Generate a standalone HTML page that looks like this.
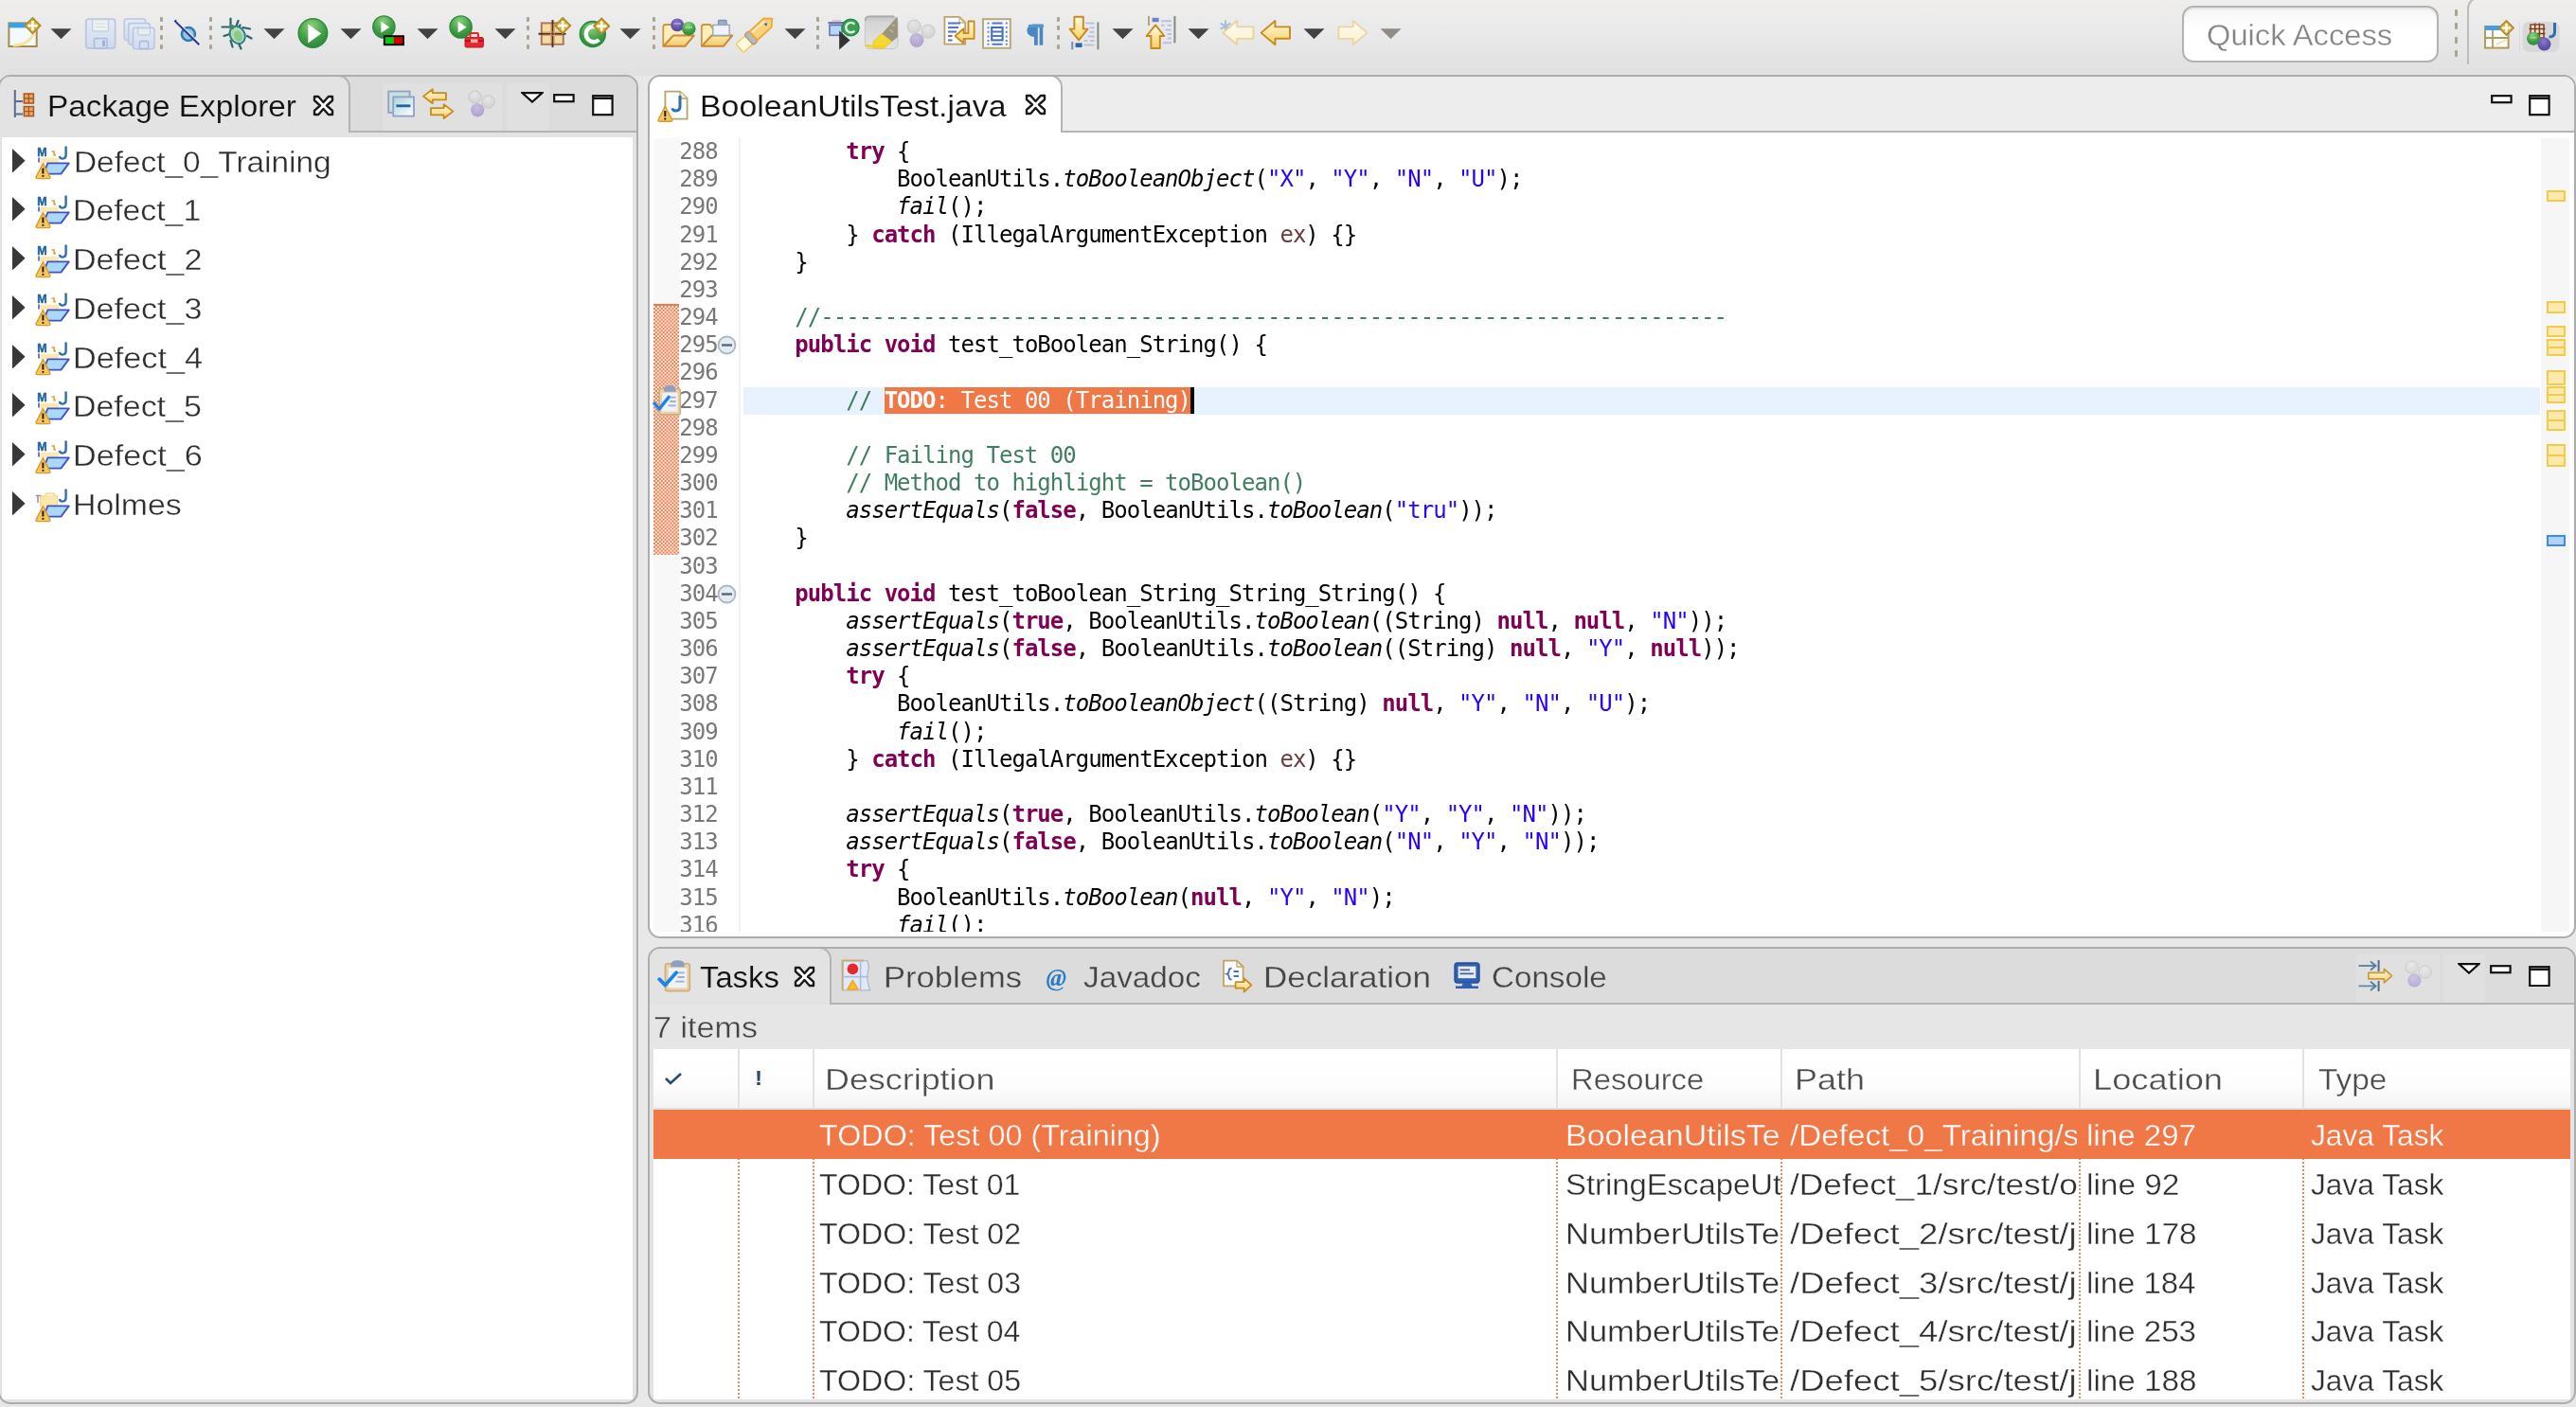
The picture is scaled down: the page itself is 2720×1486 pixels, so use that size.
<!DOCTYPE html><html><head><meta charset="utf-8"><title>Eclipse</title><style>
html,body{margin:0;padding:0;}
body{width:2720px;height:1486px;overflow:hidden;position:relative;background:#e8e8e8;font-family:"Liberation Sans", "DejaVu Sans", sans-serif;color:#222;}
div,span,svg{position:absolute;box-sizing:border-box;}
.t{filter:blur(0.45px);white-space:nowrap;transform-origin:0 0;transform:scaleX(1.10);font-size:31px;line-height:34px;color:#2a2a2a;}
.code{font-family:"DejaVu Sans Mono", "Liberation Mono", monospace;font-size:24px;letter-spacing:-0.973px;line-height:29.17px;height:29.17px;white-space:pre;color:#000;}
.code span{position:static;}
.k{color:#7f0055;font-weight:bold;}
.s{color:#2a00ff;}
.c{color:#3f7f5f;}
.i{font-style:italic;}
.v{color:#6a3e3e;}
.ln{color:#787878;}
.sel{background:#f07746;color:#fff;}
.selb{font-weight:bold;}
</style></head><body>
<div id="toolbar" style="left:0;top:0;width:2720px;height:80px;background:linear-gradient(#efeeed,#e9e9e9 45%,#e3e3e3 80%,#e1e1e1);"></div>
<svg width="0" height="0" style="left:0;top:0"><defs>
<linearGradient id="gy" x1="0" y1="0" x2="0" y2="1"><stop offset="0" stop-color="#fffbe6"/><stop offset="1" stop-color="#f9cf5f"/></linearGradient>
<linearGradient id="gyp" x1="0" y1="0" x2="0" y2="1"><stop offset="0" stop-color="#fdfaf0"/><stop offset="1" stop-color="#fbf0d0"/></linearGradient>
<radialGradient id="gg" cx="0.45" cy="0.25" r="0.8"><stop offset="0" stop-color="#8ed07f"/><stop offset="0.6" stop-color="#3f9e45"/><stop offset="1" stop-color="#2b8238"/></radialGradient>
<radialGradient id="gp" cx="0.45" cy="0.3" r="0.8"><stop offset="0" stop-color="#8a78c8"/><stop offset="1" stop-color="#4a3a98"/></radialGradient>
<radialGradient id="ggr" cx="0.45" cy="0.3" r="0.8"><stop offset="0" stop-color="#e6e6e6"/><stop offset="1" stop-color="#cfcfcf"/></radialGradient>
<radialGradient id="gpl" cx="0.45" cy="0.3" r="0.8"><stop offset="0" stop-color="#c8bede"/><stop offset="1" stop-color="#aa9ccc"/></radialGradient>
<linearGradient id="gf" x1="0" y1="0" x2="0" y2="1"><stop offset="0" stop-color="#fde9a8"/><stop offset="1" stop-color="#f6c968"/></linearGradient>
<linearGradient id="gs" x1="0" y1="0" x2="0" y2="1"><stop offset="0" stop-color="#e4ebf5"/><stop offset="1" stop-color="#cfdaec"/></linearGradient>
<linearGradient id="gt" x1="0" y1="0" x2="1" y2="1"><stop offset="0" stop-color="#a8d4d8"/><stop offset="1" stop-color="#ffffff"/></linearGradient>
<linearGradient id="gbtn" x1="0" y1="0" x2="0" y2="1"><stop offset="0" stop-color="#c4c4c4"/><stop offset="0.2" stop-color="#d6d6d6"/><stop offset="1" stop-color="#e2e2e2"/></linearGradient>
</defs></svg>
<svg style="left:0.0px;top:0.0px;filter:blur(0.5px);" width="1500.0" height="80.0" viewBox="0 0 1500 80"><rect x="9.4" y="24.4" width="29.3" height="24.6" fill="#f2fafe" stroke="#a58b4e" stroke-width="2"/><rect x="9.4" y="24" width="22" height="5.4" fill="#3ea0e0"/><path d="M14 48 Q32 47 36 34" stroke="#f6e3a0" stroke-width="3" fill="none"/><path d="M34.5 18.9 L42.7 27.1 L34.5 35.3 L26.3 27.1 Z" fill="#d9b24a" stroke="#b08a2a" stroke-width="1.6"/><path d="M34.5 22.0 V32.2 M29.4 27.1 H39.6" stroke="#fffbe8" stroke-width="2.6" fill="none"/><rect x="90.8" y="20.2" width="30.8" height="30.8" rx="3" fill="url(#gs)" stroke="#b9c8e2" stroke-width="1.8"/><rect x="97.5" y="20.5" width="17" height="12.5" rx="1.5" fill="#eef1f1" stroke="#c3cfdc" stroke-width="1.4"/><path d="M100.5 25 H111.5 M100.5 28.6 H111.5" stroke="#d4dde4" stroke-width="1.2"/><rect x="99.5" y="40.5" width="13.5" height="10.5" rx="1.5" fill="#d6deee" stroke="#a9bbdc" stroke-width="1.6"/><rect x="108" y="42.5" width="3" height="6.5" fill="#9fb3d9"/><rect x="131.2" y="20.0" width="22.5" height="22.5" rx="2.5" fill="url(#gs)" stroke="#b9c8e2" stroke-width="1.6"/><rect x="135.7" y="24.6" width="22.5" height="22.5" rx="2.5" fill="url(#gs)" stroke="#b9c8e2" stroke-width="1.6"/><rect x="140.5" y="29.3" width="22.5" height="22.5" rx="2.5" fill="url(#gs)" stroke="#b9c8e2" stroke-width="1.6"/><rect x="145.5" y="29.8" width="13" height="7.2" rx="1.2" fill="#e8edf3" stroke="#c3cfdc" stroke-width="1.3"/><rect x="147.5" y="43.5" width="9" height="8" rx="1" fill="#d6deee" stroke="#a9bbdc" stroke-width="1.4"/><circle cx="198.9" cy="36" r="7" fill="#9cc4e0" stroke="#2f7db4" stroke-width="2.6"/><path d="M184.5 21.5 L210.5 47" stroke="#2b3990" stroke-width="2.6"/><path d="M186.5 21.8 L212 46.5" stroke="#ffffff" stroke-width="1.2" opacity="0.8"/><g stroke="#2d6464" stroke-width="2.2" fill="none" stroke-linecap="round"><path d="M243.5 19.5 V27 M251.5 22 L249.5 27.5 M234.5 28.5 H243 M236.5 38 L242.5 36 M243.5 43 L245.5 49.5 M252.5 47 L254.5 51.5 M256.5 29 L264 30.5 M261 38 L265.5 40.5 M253.5 26.5 L252 30"/></g><ellipse cx="250.7" cy="36.9" rx="7.6" ry="9.6" transform="rotate(-28 250.7 36.9)" fill="#b4dcae" stroke="#2d7f95" stroke-width="2"/><ellipse cx="251.5" cy="38" rx="4.2" ry="6" transform="rotate(-28 251.5 38)" fill="#8fc98a"/><circle cx="244.8" cy="28.6" r="2.6" fill="#3e8c62"/><circle cx="330.4" cy="35" r="15.2" fill="url(#gg)" stroke="#2f8a3e" stroke-width="1.6"/><path d="M325.3 25.4 V45.4 L339.2 35.4 Z" fill="#ffffff"/><circle cx="405.4" cy="28.5" r="11.6" fill="url(#gg)" stroke="#2f8a3e" stroke-width="1.4"/><path d="M402.4 22.8 V34.6 L411.4 28.8 Z" fill="#ffffff"/><rect x="405.8" y="38.2" width="20.2" height="9" fill="#d40000" stroke="#000" stroke-width="1.9"/><rect x="406.8" y="39.2" width="9" height="7" fill="#00cc10"/><circle cx="486.6" cy="28.5" r="11.6" fill="url(#gg)" stroke="#2f8a3e" stroke-width="1.4"/><path d="M483.6 22.8 V34.6 L492.6 28.8 Z" fill="#ffffff"/><rect x="491" y="39.5" width="19.4" height="10.5" rx="1.5" fill="#e8242c" stroke="#c81820" stroke-width="1"/><rect x="496.5" y="35" width="8.5" height="5.5" rx="1" fill="none" stroke="#e8242c" stroke-width="2"/><path d="M491 43.2 H510.4" stroke="#a01018" stroke-width="1.6"/><rect x="497" y="41.5" width="7.5" height="3.6" fill="#f5b0b0"/><rect x="571.8" y="24.4" width="23" height="22.4" fill="#f3dba4" stroke="#b07a50" stroke-width="2"/><path d="M583.5 21 V50 M568.5 35.7 H597.5" stroke="#5c2d1c" stroke-width="2"/><path d="M573 34 H594 M573 37.4 H594 M581.8 25.5 V46 M585.2 25.5 V46" stroke="#c49a68" stroke-width="1.2" opacity="0.8"/><path d="M594.2 18.9 L602.4 27.1 L594.2 35.3 L586.0 27.1 Z" fill="#d9b24a" stroke="#b08a2a" stroke-width="1.6"/><path d="M594.2 22.0 V32.2 M589.1 27.1 H599.3" stroke="#fffbe8" stroke-width="2.6" fill="none"/><circle cx="625.8" cy="36" r="13.4" fill="url(#gg)" stroke="#2a8a40" stroke-width="1.6"/><path d="M632.5 30 A8.2 8.2 0 1 0 632.5 42" stroke="#ffffff" stroke-width="4.4" fill="none"/><path d="M635.2 19.4 L643.4 27.6 L635.2 35.8 L627.0 27.6 Z" fill="#d9b24a" stroke="#b08a2a" stroke-width="1.6"/><path d="M635.2 22.5 V32.7 M630.1 27.6 H640.3" stroke="#fffbe8" stroke-width="2.6" fill="none"/><path d="M700.3 48.6 V28.5 Q700.3 26 702.8 26 H709.3 L711.8 29.5 H723.3 V38" fill="#fdeebc" stroke="#cf9540" stroke-width="1.8"/><path d="M700.5 48.8 L710.8 37.6 H732.7 L723.3 48.8 Z" fill="url(#gf)" stroke="#c88838" stroke-width="2" stroke-linejoin="round"/><circle cx="715.2" cy="26.4" r="6.9" fill="url(#gp)"/><path d="M711.5 25 H719" stroke="#b9aee0" stroke-width="1.4"/><circle cx="727.3" cy="30.2" r="7.3" fill="url(#gg)"/><path d="M723.5 29 H731" stroke="#a8dca0" stroke-width="1.4"/><path d="M740.8 48.6 V28.5 Q740.8 26 743.3 26 H749.8 L752.3 29.5 H763.8 V38" fill="#fdeebc" stroke="#cf9540" stroke-width="1.8"/><path d="M741.0 48.8 L751.3 37.6 H773.2 L763.8 48.8 Z" fill="url(#gf)" stroke="#c88838" stroke-width="2" stroke-linejoin="round"/><rect x="758.5" y="21.5" width="8.6" height="5" rx="1" fill="#9db0d0" stroke="#7890b8" stroke-width="1.3"/><rect x="752.8" y="26.4" width="17.4" height="11" fill="#f0f3fc" stroke="#9aa8b0" stroke-width="1.4"/><g transform="rotate(-42.5 798 35.5)"><rect x="775" y="29.5" width="14" height="12" rx="2" fill="#fffbe0" stroke="#f3cf60" stroke-width="1.6"/><rect x="788" y="28.2" width="6.5" height="14.6" rx="2.5" fill="#b9b7c0" stroke="#a89868" stroke-width="1.2"/><path d="M794.5 29.3 H815 L821.5 35.5 L815 41.7 H794.5 Z" fill="#fbd27c" stroke="#eaa838" stroke-width="1.7"/><path d="M796 32 H814" stroke="#fdeabb" stroke-width="2.2"/><path d="M811.5 33.5 l3 2 l-3 2 z" fill="#3557a8"/></g><rect x="876" y="26.5" width="13" height="10.8" fill="#b5d9f3" stroke="#6a72b8" stroke-width="1.6"/><path d="M874.5 24.2 H891" stroke="#6a72b8" stroke-width="2.4"/><path d="M879 22 H888" stroke="#e3c3c8" stroke-width="2.2"/><path d="M886.1 32.4 V52.6 L897.6 42.5 Z" fill="#333333"/><circle cx="898.2" cy="29" r="8.8" fill="#3aa052" stroke="#1f8a3e" stroke-width="1.5"/><path d="M902.3 25.6 A5.2 5.2 0 1 0 902.3 32.6" stroke="#e6f5e6" stroke-width="2.4" fill="none"/><rect x="913.4" y="17.2" width="34.6" height="34.4" rx="5" fill="url(#gbtn)" stroke="#c6c6c6" stroke-width="1"/><path d="M913.6 22 Q913.6 17.4 918 17.4 H944" stroke="#a9a9a9" stroke-width="1.6" fill="none"/><path d="M947.6 17.6 L948 39 L941 44.5 L930.5 36.5 Z" fill="#9b957c"/><path d="M942 26 l3 1.5 M939.5 31.5 l4 2.5" stroke="#b9b5a0" stroke-width="1.5"/><path d="M931 35.6 L941.5 43.8 L933.5 51 L921.5 50.4 L922.6 43.5 Z" fill="#f6d832" stroke="#e8c020" stroke-width="0.8"/><path d="M913.8 48.2 L934 50 " stroke="#f2d21e" stroke-width="2.6"/><circle cx="965.2" cy="28.0" r="7.0" fill="url(#ggr)" stroke="#c6c6c6" stroke-width="1"/><circle cx="980.1" cy="33.2" r="7.0" fill="url(#ggr)" stroke="#c6c6c6" stroke-width="1"/><circle cx="968.0" cy="42.5" r="7.5" fill="url(#gpl)"/><path d="M997.4 17.9 H1013 L1019.2 24 V46.6 H997.4 Z" fill="#fbfcfd" stroke="#b9a468" stroke-width="1.8"/><path d="M1013 17.9 V24 H1019.2" fill="none" stroke="#c9b888" stroke-width="1.3"/><path d="M1001 24.5 H1014 M1001 29 H1012 M1001 33.5 H1010 M1001 38 H1005.5 M1001 42.5 H1005.5" stroke="#5575c0" stroke-width="2"/><path d="M1022.5 22.5 H1028.6 V40.8 H1017.5 V45.8 L1008.5 38 L1017.5 30.3 V35.2 H1022.5 Z" fill="url(#gy)" stroke="#c88a1c" stroke-width="1.8" stroke-linejoin="round"/><rect x="1038" y="20.2" width="28.8" height="30.6" fill="#f6f8fc" stroke="#b7a978" stroke-width="2"/><rect x="1047.2" y="29" width="11.4" height="13.4" fill="#fff" stroke="#3a6fb4" stroke-width="2"/><path d="M1047.5 24.6 H1058.5 M1047.5 33.4 H1058.5 M1047.5 38 H1058.5 M1047.5 46.8 H1058.5" stroke="#5575c0" stroke-width="2"/><path d="M1042.5 24.6 h2 M1042.5 29.2 h2 M1042.5 33.8 h2 M1042.5 38.4 h2 M1042.5 43 h2 M1042.5 46.8 h2 M1061.8 24.6 h2 M1061.8 29.2 h2 M1061.8 33.8 h2 M1061.8 38.4 h2 M1061.8 43 h2 M1061.8 46.8 h2" stroke="#6a86c8" stroke-width="2"/><path d="M1101.5 25.6 H1091 A6.6 6.6 0 0 0 1091 38.8 H1092 V47.8 H1095.8 V29 H1097.6 V47.8 H1101.2 V29 Z" fill="#4a86c4"/><path d="M1086 26 H1102 V29.2 H1086 Z" fill="#5a94cc"/><path d="M1146 24.6 H1155.5 M1150.5 29.2 H1155.5 M1150.5 33.8 H1155.5 M1148.5 38.4 H1155.5 M1144.5 43 H1148.5 M1151 43 H1155.5 M1144.5 47.4 H1155.5" stroke="#b9c1e3" stroke-width="2"/><path d="M1159.4 23.4 V52.3" stroke="#7f8a7c" stroke-width="2"/><path d="M1132.2 44 V52.3" stroke="#7f8cb0" stroke-width="2"/><rect x="1135.6" y="45.4" width="7" height="4.6" fill="#2f66a8"/><path d="M1134.4 17.8 H1143.8 V30.6 H1148.6 L1139.1 42.4 L1129.6 30.6 H1134.4 Z" fill="url(#gy)" stroke="#c88a1c" stroke-width="1.9" stroke-linejoin="round"/><path d="M1226 22.2 H1237 M1226 26.8 H1229.5 M1232.5 26.8 H1237 M1230.5 31.4 H1237 M1232.5 36 H1237 M1232.5 40.6 H1237 M1228 45.2 H1237" stroke="#b9c1e3" stroke-width="2"/><path d="M1240.4 16.9 V45.3" stroke="#7f8a7c" stroke-width="2"/><path d="M1213 16.9 V27" stroke="#b0a870" stroke-width="2"/><rect x="1216.6" y="18.8" width="7" height="4.4" fill="#6c83c0"/><path d="M1215.4 51 H1224.8 V38 H1229.4 L1220.1 26.4 L1210.6 38 H1215.4 Z" fill="url(#gy)" stroke="#c88a1c" stroke-width="1.9" stroke-linejoin="round"/><path d="M1294 21.6 V33.6 M1288.6 24.6 L1299.4 30.6 M1299.4 24.6 L1288.6 30.6" stroke="#a4bedb" stroke-width="2"/><path d="M1291.4 34.6 L1306.2 22 V28.4 H1323.4 V40.8 H1306.2 V47.2 Z" fill="url(#gyp)" stroke="#ead29c" stroke-width="1.8" stroke-linejoin="round"/><path d="M1331.6 34.6 L1346.4 22 V28.4 H1362 V40.8 H1346.4 V47.2 Z" fill="url(#gy)" stroke="#c88a1c" stroke-width="1.9" stroke-linejoin="round"/><path d="M1443.6 34.6 L1428.8 22 V28.4 H1413.4 V40.8 H1428.8 V47.2 Z" fill="url(#gyp)" stroke="#ecd4a0" stroke-width="1.8" stroke-linejoin="round"/></svg>
<svg style="left:53.4px;top:29.6px;filter:blur(0.5px);" width="23.0" height="11.4" viewBox="0 0 23 11.4"><path d="M0.5 0.3 H22.5 L11.5 11.2 Z" fill="#424242"/></svg>
<svg style="left:278.2px;top:29.6px;filter:blur(0.5px);" width="23.0" height="11.4" viewBox="0 0 23 11.4"><path d="M0.5 0.3 H22.5 L11.5 11.2 Z" fill="#424242"/></svg>
<svg style="left:359.3px;top:29.6px;filter:blur(0.5px);" width="23.0" height="11.4" viewBox="0 0 23 11.4"><path d="M0.5 0.3 H22.5 L11.5 11.2 Z" fill="#424242"/></svg>
<svg style="left:440.3px;top:29.6px;filter:blur(0.5px);" width="23.0" height="11.4" viewBox="0 0 23 11.4"><path d="M0.5 0.3 H22.5 L11.5 11.2 Z" fill="#424242"/></svg>
<svg style="left:521.5px;top:29.6px;filter:blur(0.5px);" width="23.0" height="11.4" viewBox="0 0 23 11.4"><path d="M0.5 0.3 H22.5 L11.5 11.2 Z" fill="#424242"/></svg>
<svg style="left:654.3px;top:29.6px;filter:blur(0.5px);" width="23.0" height="11.4" viewBox="0 0 23 11.4"><path d="M0.5 0.3 H22.5 L11.5 11.2 Z" fill="#424242"/></svg>
<svg style="left:827.9px;top:29.6px;filter:blur(0.5px);" width="23.0" height="11.4" viewBox="0 0 23 11.4"><path d="M0.5 0.3 H22.5 L11.5 11.2 Z" fill="#424242"/></svg>
<svg style="left:1173.8px;top:29.6px;filter:blur(0.5px);" width="23.0" height="11.4" viewBox="0 0 23 11.4"><path d="M0.5 0.3 H22.5 L11.5 11.2 Z" fill="#424242"/></svg>
<svg style="left:1254.4px;top:29.6px;filter:blur(0.5px);" width="23.0" height="11.4" viewBox="0 0 23 11.4"><path d="M0.5 0.3 H22.5 L11.5 11.2 Z" fill="#424242"/></svg>
<svg style="left:1376.4px;top:29.6px;filter:blur(0.5px);" width="23.0" height="11.4" viewBox="0 0 23 11.4"><path d="M0.5 0.3 H22.5 L11.5 11.2 Z" fill="#424242"/></svg>
<svg style="left:1457.4px;top:29.6px;filter:blur(0.5px);" width="23.0" height="11.4" viewBox="0 0 23 11.4"><path d="M0.5 0.3 H22.5 L11.5 11.2 Z" fill="#8f8c86"/></svg>
<div style="left:168.8px;top:17.6px;width:3.4px;height:5px;background:#a9a494;border-radius:1px;filter:blur(0.5px);"></div><div style="left:168.8px;top:27.4px;width:3.4px;height:5px;background:#a9a494;border-radius:1px;filter:blur(0.5px);"></div><div style="left:168.8px;top:37.2px;width:3.4px;height:5px;background:#a9a494;border-radius:1px;filter:blur(0.5px);"></div><div style="left:168.8px;top:47.0px;width:3.4px;height:5px;background:#a9a494;border-radius:1px;filter:blur(0.5px);"></div>
<div style="left:220.6px;top:17.6px;width:3.4px;height:5px;background:#a9a494;border-radius:1px;filter:blur(0.5px);"></div><div style="left:220.6px;top:27.4px;width:3.4px;height:5px;background:#a9a494;border-radius:1px;filter:blur(0.5px);"></div><div style="left:220.6px;top:37.2px;width:3.4px;height:5px;background:#a9a494;border-radius:1px;filter:blur(0.5px);"></div><div style="left:220.6px;top:47.0px;width:3.4px;height:5px;background:#a9a494;border-radius:1px;filter:blur(0.5px);"></div>
<div style="left:555.7px;top:17.6px;width:3.4px;height:5px;background:#a9a494;border-radius:1px;filter:blur(0.5px);"></div><div style="left:555.7px;top:27.4px;width:3.4px;height:5px;background:#a9a494;border-radius:1px;filter:blur(0.5px);"></div><div style="left:555.7px;top:37.2px;width:3.4px;height:5px;background:#a9a494;border-radius:1px;filter:blur(0.5px);"></div><div style="left:555.7px;top:47.0px;width:3.4px;height:5px;background:#a9a494;border-radius:1px;filter:blur(0.5px);"></div>
<div style="left:688.9px;top:17.6px;width:3.4px;height:5px;background:#a9a494;border-radius:1px;filter:blur(0.5px);"></div><div style="left:688.9px;top:27.4px;width:3.4px;height:5px;background:#a9a494;border-radius:1px;filter:blur(0.5px);"></div><div style="left:688.9px;top:37.2px;width:3.4px;height:5px;background:#a9a494;border-radius:1px;filter:blur(0.5px);"></div><div style="left:688.9px;top:47.0px;width:3.4px;height:5px;background:#a9a494;border-radius:1px;filter:blur(0.5px);"></div>
<div style="left:861.6px;top:17.6px;width:3.4px;height:5px;background:#a9a494;border-radius:1px;filter:blur(0.5px);"></div><div style="left:861.6px;top:27.4px;width:3.4px;height:5px;background:#a9a494;border-radius:1px;filter:blur(0.5px);"></div><div style="left:861.6px;top:37.2px;width:3.4px;height:5px;background:#a9a494;border-radius:1px;filter:blur(0.5px);"></div><div style="left:861.6px;top:47.0px;width:3.4px;height:5px;background:#a9a494;border-radius:1px;filter:blur(0.5px);"></div>
<div style="left:1116.1px;top:17.6px;width:3.4px;height:5px;background:#a9a494;border-radius:1px;filter:blur(0.5px);"></div><div style="left:1116.1px;top:27.4px;width:3.4px;height:5px;background:#a9a494;border-radius:1px;filter:blur(0.5px);"></div><div style="left:1116.1px;top:37.2px;width:3.4px;height:5px;background:#a9a494;border-radius:1px;filter:blur(0.5px);"></div><div style="left:1116.1px;top:47.0px;width:3.4px;height:5px;background:#a9a494;border-radius:1px;filter:blur(0.5px);"></div>
<div style="left:2591.9px;top:9.7px;width:3.4px;height:7px;background:#a9a494;border-radius:1px;filter:blur(0.5px);"></div>
<div style="left:2591.9px;top:24.1px;width:3.4px;height:7px;background:#a9a494;border-radius:1px;filter:blur(0.5px);"></div>
<div style="left:2591.9px;top:38.5px;width:3.4px;height:7px;background:#a9a494;border-radius:1px;filter:blur(0.5px);"></div>
<div style="left:2591.9px;top:52.9px;width:3.4px;height:7px;background:#a9a494;border-radius:1px;filter:blur(0.5px);"></div>
<div style="left:2304px;top:6px;width:271px;height:60px;border:2px solid #b3b3b3;border-radius:12px;background:linear-gradient(#f6f6f6,#ffffff 40%);box-shadow:inset 0 2px 2px rgba(0,0,0,0.08);"></div>
<div class="t" style="left:2329.9px;top:20.7px;color:#858585;transform:scaleX(1.0543);-webkit-text-stroke:0.35px #fdfdfd;">Quick Access</div>
<div style="left:2604.6px;top:-3px;width:140px;height:71px;border-left:2px solid #bdbdbd;border-top:2px solid #bdbdbd;border-radius:12px 0 0 0;"></div>
<svg style="left:2600.0px;top:0.0px;filter:blur(0.5px);" width="120.0" height="80.0" viewBox="2600 0 120 80"><rect x="2624" y="28" width="24.6" height="22.6" fill="#fbfdff" stroke="#b09a5c" stroke-width="2"/><rect x="2624" y="27" width="19" height="5" fill="#4a9be0"/><path d="M2632 32 V50.6 M2624 40 H2648.6" stroke="#b09a5c" stroke-width="1.8"/><path d="M2636 47 L2646 42" stroke="#f0dcae" stroke-width="1.6"/><path d="M2646.5 21.9 L2654.1 29.5 L2646.5 37.1 L2638.9 29.5 Z" fill="#d9b24a" stroke="#b08a2a" stroke-width="1.6"/><path d="M2646.5 24.8 V34.2 M2641.8 29.5 H2651.2" stroke="#fffbe8" stroke-width="2.6" fill="none"/><rect x="2663.5" y="23" width="39" height="32" rx="7" fill="#d8d8d8"/><path d="M2672 26 H2686 V40 H2672 Z" fill="#f5e3c0" stroke="#8a4a32" stroke-width="1.6"/><path d="M2676.7 24.5 V41 M2681.4 24.5 V41 M2670.5 30.6 H2687.5 M2670.5 35.4 H2687.5" stroke="#7a3a28" stroke-width="1.5"/><path d="M2697.5 24 V34 Q2697.5 39 2691.5 39" stroke="#2f6fb0" stroke-width="3" fill="none"/><circle cx="2675" cy="40.8" r="7" fill="url(#gg)"/><path d="M2671.5 39.8 H2678.5" stroke="#a8dca0" stroke-width="1.3"/><circle cx="2686.5" cy="46.6" r="7" fill="url(#gp)"/></svg>
<div style="left:2659.5px;top:22px;width:1.5px;height:34px;background:#dcdcdc;"></div>
<div id="left" style="left:-2px;top:79px;width:676px;height:1404px;border:2px solid #adadad;border-radius:13px;background:#e3e3e3;overflow:hidden;"><div style="left:0;top:0;width:100%;height:59px;background:#dcdcdc;border-bottom:2px solid #b4b4b4;"></div><div style="left:-2px;top:-2px;width:372px;height:61px;background:#e3e3e3;border:2px solid #b4b4b4;border-bottom:none;border-radius:13px 13px 0 0;"></div><div style="left:0;top:57px;width:368px;height:2px;background:#e3e3e3;"></div><div style="left:2px;top:64px;width:666px;height:1333px;background:#fff;"></div></div>
<div class="t" style="left:49.9px;top:96.1px;color:#111;transform:scaleX(1.0744);-webkit-text-stroke:0.12px #e3e3e3;">Package Explorer</div>
<svg style="left:10.0px;top:90.0px;filter:blur(0.5px);" width="36.0" height="40.0" viewBox="10 90 36 40"><path d="M15.8 95 V124 M15.8 107 H24 M15.8 120.4 H24" stroke="#5a6a8c" stroke-width="2" fill="none"/><rect x="25.4" y="99" width="10" height="10" fill="#e8a868" stroke="#a85a2a" stroke-width="1.6"/><path d="M30.4 99 V109 M25.4 104 H35.4" stroke="#a85a2a" stroke-width="1.4"/><rect x="25.4" y="112.6" width="10" height="10" fill="#e8a868" stroke="#a85a2a" stroke-width="1.6"/><path d="M30.4 112.6 V122.6 M25.4 117.6 H35.4" stroke="#a85a2a" stroke-width="1.4"/></svg>
<svg style="left:329.5px;top:99.9px;filter:blur(0.5px);" width="23.0" height="23.0" viewBox="0 0 23 23"><path d="M2 2 L6.2 2 L11.5 8 L16.8 2 L21 2 L21 6.2 L15 11.5 L21 16.8 L21 21 L16.8 21 L11.5 15 L6.2 21 L2 21 L2 16.8 L8 11.5 L2 6.2 Z" fill="#fff" stroke="#1a1a1a" stroke-width="2.4" stroke-linejoin="round"/></svg>
<div style="left:404px;top:88px;width:126px;height:50px;background:rgba(255,255,255,0.12);"></div>
<div style="left:535px;top:88px;width:45px;height:50px;background:rgba(255,255,255,0.12);"></div>
<svg style="left:400.0px;top:85.0px;filter:blur(0.5px);" width="140.0" height="50.0" viewBox="400 85 140 50"><rect x="410.2" y="96.5" width="22.4" height="22.4" fill="#c9dfe2" stroke="#8fa2c4" stroke-width="1.8"/><rect x="415.2" y="102.4" width="21.8" height="20.2" fill="url(#gt)" stroke="#8fa2c4" stroke-width="1.8"/><path d="M418.4 111.8 H433.4" stroke="#1c62a4" stroke-width="2.8"/><path d="M447 101.6 L456.8 94.2 V98.2 H471 V105.4 H456.8 V109.2 Z" fill="url(#gy)" stroke="#c88a1c" stroke-width="1.8" stroke-linejoin="round"/><path d="M478.4 117.6 L468.6 110.2 V114.2 H455 V121.4 H468.6 V125 Z" fill="url(#gy)" stroke="#c88a1c" stroke-width="1.8" stroke-linejoin="round"/><circle cx="501.5" cy="102.5" r="6.6" fill="url(#ggr)" stroke="#c6c6c6" stroke-width="1"/><circle cx="515.7" cy="107.4" r="6.6" fill="url(#ggr)" stroke="#c6c6c6" stroke-width="1"/><circle cx="504.2" cy="116.3" r="7.1" fill="url(#gpl)"/></svg>
<svg style="left:549.6px;top:97.2px;filter:blur(0.5px);" width="24.0" height="12.0" viewBox="0 0 24 12"><path d="M1.6 1.2 H22.4 L12 10.6 Z" fill="#fff" stroke="#111" stroke-width="2.2" stroke-linejoin="miter"/></svg>
<svg style="left:584.2px;top:99.4px;filter:blur(0.5px);" width="23.0" height="10.0" viewBox="0 0 23 10"><rect x="1.2" y="1.2" width="20.4" height="7" fill="#fff" stroke="#111" stroke-width="2.2"/></svg>
<svg style="left:624.8px;top:100.2px;filter:blur(0.5px);" width="23.0" height="22.4" viewBox="0 0 23 22.4"><rect x="1.2" y="1.2" width="20.4" height="20" fill="#fff" stroke="#111" stroke-width="2.2"/><path d="M1.2 3.8 H21.6" stroke="#111" stroke-width="2.4"/></svg>
<svg style="left:36.0px;top:150.0px;filter:blur(0.5px);" width="40.0" height="42.0" viewBox="36 150 40 42"><text x="39.2" y="164.6" font-family="Liberation Sans, sans-serif" font-weight="bold" font-size="12.5" fill="#1f64a0" stroke="#1f64a0" stroke-width="0.5">M</text><path d="M54.5 160 h2.6 v3.6 h2" stroke="#e0a040" stroke-width="1.6" fill="none"/><path d="M69.6 154.4 V163.6 Q69.6 167.6 66 167.6 Q63.4 167.6 62.8 165" stroke="#2f6fa8" stroke-width="2.4" fill="none"/><path d="M42.8 172.6 V167.2 H61.6 V172" fill="#fbe7b0" stroke="#fbe7b0" stroke-width="1"/><path d="M41 166.4 V171.4" stroke="#4a58c0" stroke-width="1.6"/><path d="M50.4 172.4 H72.8 L64.4 183.6 H46 Z" fill="#a9d8f9" stroke="#4152c4" stroke-width="1.8" stroke-linejoin="round"/><path d="M45.4 172.6 L52.8 186.8 Q53.4 188.6 51.4 188.6 H39.6 Q37.4 188.6 38.2 186.6 Z" fill="#f5c860" stroke="#d89a30" stroke-width="1.4" stroke-linejoin="round"/><path d="M45.4 177.4 V183.4 M45.4 185 V186.8" stroke="#2a1a00" stroke-width="2"/></svg>
<svg style="left:36.0px;top:201.8px;filter:blur(0.5px);" width="40.0" height="42.0" viewBox="36 150 40 42"><text x="39.2" y="164.6" font-family="Liberation Sans, sans-serif" font-weight="bold" font-size="12.5" fill="#1f64a0" stroke="#1f64a0" stroke-width="0.5">M</text><path d="M54.5 160 h2.6 v3.6 h2" stroke="#e0a040" stroke-width="1.6" fill="none"/><path d="M69.6 154.4 V163.6 Q69.6 167.6 66 167.6 Q63.4 167.6 62.8 165" stroke="#2f6fa8" stroke-width="2.4" fill="none"/><path d="M42.8 172.6 V167.2 H61.6 V172" fill="#fbe7b0" stroke="#fbe7b0" stroke-width="1"/><path d="M41 166.4 V171.4" stroke="#4a58c0" stroke-width="1.6"/><path d="M50.4 172.4 H72.8 L64.4 183.6 H46 Z" fill="#a9d8f9" stroke="#4152c4" stroke-width="1.8" stroke-linejoin="round"/><path d="M45.4 172.6 L52.8 186.8 Q53.4 188.6 51.4 188.6 H39.6 Q37.4 188.6 38.2 186.6 Z" fill="#f5c860" stroke="#d89a30" stroke-width="1.4" stroke-linejoin="round"/><path d="M45.4 177.4 V183.4 M45.4 185 V186.8" stroke="#2a1a00" stroke-width="2"/></svg>
<svg style="left:36.0px;top:253.5px;filter:blur(0.5px);" width="40.0" height="42.0" viewBox="36 150 40 42"><text x="39.2" y="164.6" font-family="Liberation Sans, sans-serif" font-weight="bold" font-size="12.5" fill="#1f64a0" stroke="#1f64a0" stroke-width="0.5">M</text><path d="M54.5 160 h2.6 v3.6 h2" stroke="#e0a040" stroke-width="1.6" fill="none"/><path d="M69.6 154.4 V163.6 Q69.6 167.6 66 167.6 Q63.4 167.6 62.8 165" stroke="#2f6fa8" stroke-width="2.4" fill="none"/><path d="M42.8 172.6 V167.2 H61.6 V172" fill="#fbe7b0" stroke="#fbe7b0" stroke-width="1"/><path d="M41 166.4 V171.4" stroke="#4a58c0" stroke-width="1.6"/><path d="M50.4 172.4 H72.8 L64.4 183.6 H46 Z" fill="#a9d8f9" stroke="#4152c4" stroke-width="1.8" stroke-linejoin="round"/><path d="M45.4 172.6 L52.8 186.8 Q53.4 188.6 51.4 188.6 H39.6 Q37.4 188.6 38.2 186.6 Z" fill="#f5c860" stroke="#d89a30" stroke-width="1.4" stroke-linejoin="round"/><path d="M45.4 177.4 V183.4 M45.4 185 V186.8" stroke="#2a1a00" stroke-width="2"/></svg>
<svg style="left:36.0px;top:305.2px;filter:blur(0.5px);" width="40.0" height="42.0" viewBox="36 150 40 42"><text x="39.2" y="164.6" font-family="Liberation Sans, sans-serif" font-weight="bold" font-size="12.5" fill="#1f64a0" stroke="#1f64a0" stroke-width="0.5">M</text><path d="M54.5 160 h2.6 v3.6 h2" stroke="#e0a040" stroke-width="1.6" fill="none"/><path d="M69.6 154.4 V163.6 Q69.6 167.6 66 167.6 Q63.4 167.6 62.8 165" stroke="#2f6fa8" stroke-width="2.4" fill="none"/><path d="M42.8 172.6 V167.2 H61.6 V172" fill="#fbe7b0" stroke="#fbe7b0" stroke-width="1"/><path d="M41 166.4 V171.4" stroke="#4a58c0" stroke-width="1.6"/><path d="M50.4 172.4 H72.8 L64.4 183.6 H46 Z" fill="#a9d8f9" stroke="#4152c4" stroke-width="1.8" stroke-linejoin="round"/><path d="M45.4 172.6 L52.8 186.8 Q53.4 188.6 51.4 188.6 H39.6 Q37.4 188.6 38.2 186.6 Z" fill="#f5c860" stroke="#d89a30" stroke-width="1.4" stroke-linejoin="round"/><path d="M45.4 177.4 V183.4 M45.4 185 V186.8" stroke="#2a1a00" stroke-width="2"/></svg>
<svg style="left:36.0px;top:357.0px;filter:blur(0.5px);" width="40.0" height="42.0" viewBox="36 150 40 42"><text x="39.2" y="164.6" font-family="Liberation Sans, sans-serif" font-weight="bold" font-size="12.5" fill="#1f64a0" stroke="#1f64a0" stroke-width="0.5">M</text><path d="M54.5 160 h2.6 v3.6 h2" stroke="#e0a040" stroke-width="1.6" fill="none"/><path d="M69.6 154.4 V163.6 Q69.6 167.6 66 167.6 Q63.4 167.6 62.8 165" stroke="#2f6fa8" stroke-width="2.4" fill="none"/><path d="M42.8 172.6 V167.2 H61.6 V172" fill="#fbe7b0" stroke="#fbe7b0" stroke-width="1"/><path d="M41 166.4 V171.4" stroke="#4a58c0" stroke-width="1.6"/><path d="M50.4 172.4 H72.8 L64.4 183.6 H46 Z" fill="#a9d8f9" stroke="#4152c4" stroke-width="1.8" stroke-linejoin="round"/><path d="M45.4 172.6 L52.8 186.8 Q53.4 188.6 51.4 188.6 H39.6 Q37.4 188.6 38.2 186.6 Z" fill="#f5c860" stroke="#d89a30" stroke-width="1.4" stroke-linejoin="round"/><path d="M45.4 177.4 V183.4 M45.4 185 V186.8" stroke="#2a1a00" stroke-width="2"/></svg>
<svg style="left:36.0px;top:408.8px;filter:blur(0.5px);" width="40.0" height="42.0" viewBox="36 150 40 42"><text x="39.2" y="164.6" font-family="Liberation Sans, sans-serif" font-weight="bold" font-size="12.5" fill="#1f64a0" stroke="#1f64a0" stroke-width="0.5">M</text><path d="M54.5 160 h2.6 v3.6 h2" stroke="#e0a040" stroke-width="1.6" fill="none"/><path d="M69.6 154.4 V163.6 Q69.6 167.6 66 167.6 Q63.4 167.6 62.8 165" stroke="#2f6fa8" stroke-width="2.4" fill="none"/><path d="M42.8 172.6 V167.2 H61.6 V172" fill="#fbe7b0" stroke="#fbe7b0" stroke-width="1"/><path d="M41 166.4 V171.4" stroke="#4a58c0" stroke-width="1.6"/><path d="M50.4 172.4 H72.8 L64.4 183.6 H46 Z" fill="#a9d8f9" stroke="#4152c4" stroke-width="1.8" stroke-linejoin="round"/><path d="M45.4 172.6 L52.8 186.8 Q53.4 188.6 51.4 188.6 H39.6 Q37.4 188.6 38.2 186.6 Z" fill="#f5c860" stroke="#d89a30" stroke-width="1.4" stroke-linejoin="round"/><path d="M45.4 177.4 V183.4 M45.4 185 V186.8" stroke="#2a1a00" stroke-width="2"/></svg>
<svg style="left:36.0px;top:460.5px;filter:blur(0.5px);" width="40.0" height="42.0" viewBox="36 150 40 42"><text x="39.2" y="164.6" font-family="Liberation Sans, sans-serif" font-weight="bold" font-size="12.5" fill="#1f64a0" stroke="#1f64a0" stroke-width="0.5">M</text><path d="M54.5 160 h2.6 v3.6 h2" stroke="#e0a040" stroke-width="1.6" fill="none"/><path d="M69.6 154.4 V163.6 Q69.6 167.6 66 167.6 Q63.4 167.6 62.8 165" stroke="#2f6fa8" stroke-width="2.4" fill="none"/><path d="M42.8 172.6 V167.2 H61.6 V172" fill="#fbe7b0" stroke="#fbe7b0" stroke-width="1"/><path d="M41 166.4 V171.4" stroke="#4a58c0" stroke-width="1.6"/><path d="M50.4 172.4 H72.8 L64.4 183.6 H46 Z" fill="#a9d8f9" stroke="#4152c4" stroke-width="1.8" stroke-linejoin="round"/><path d="M45.4 172.6 L52.8 186.8 Q53.4 188.6 51.4 188.6 H39.6 Q37.4 188.6 38.2 186.6 Z" fill="#f5c860" stroke="#d89a30" stroke-width="1.4" stroke-linejoin="round"/><path d="M45.4 177.4 V183.4 M45.4 185 V186.8" stroke="#2a1a00" stroke-width="2"/></svg>
<svg style="left:36.0px;top:512.2px;filter:blur(0.5px);" width="40.0" height="42.0" viewBox="36 150 40 42"><path d="M69.6 154.4 V163.6 Q69.6 167.6 66 167.6 Q63.4 167.6 62.8 165" stroke="#2f6fa8" stroke-width="2.4" fill="none"/><path d="M42.6 173 V161.8 H47.2 L48.8 158.8 H56.8 L58.2 161.8 H60.6 V173 Z" fill="#fce7aa" stroke="#f6d994" stroke-width="1.2"/><path d="M50 160.6 H56" stroke="#fffaf0" stroke-width="1.6"/><path d="M37.8 161.6 H43 M40 161.6 V169" stroke="#9c8cac" stroke-width="1.5" fill="none"/><path d="M50.4 172.4 H72.8 L64.4 183.6 H46 Z" fill="#a9d8f9" stroke="#4152c4" stroke-width="1.8" stroke-linejoin="round"/><path d="M45.4 172.6 L52.8 186.8 Q53.4 188.6 51.4 188.6 H39.6 Q37.4 188.6 38.2 186.6 Z" fill="#f5c860" stroke="#d89a30" stroke-width="1.4" stroke-linejoin="round"/><path d="M45.4 177.4 V183.4 M45.4 185 V186.8" stroke="#2a1a00" stroke-width="2"/></svg>
<div class="t" style="left:77.6px;top:154.6px;color:#2e2e2e;transform:scaleX(1.0774);-webkit-text-stroke:0.35px #fff;">Defect_0_Training</div>
<svg style="left:13.1px;top:156.70px;filter:blur(0.5px)" width="14" height="25.6" viewBox="0 0 14 25.6"><path d="M0 0 L13.6 12.8 L0 25.6 Z" fill="#383838"/></svg>
<div class="t" style="left:77.4px;top:206.3px;color:#2e2e2e;transform:scaleX(1.0893);-webkit-text-stroke:0.35px #fff;">Defect_1</div>
<svg style="left:13.1px;top:208.45px;filter:blur(0.5px)" width="14" height="25.6" viewBox="0 0 14 25.6"><path d="M0 0 L13.6 12.8 L0 25.6 Z" fill="#383838"/></svg>
<div class="t" style="left:77.4px;top:258.1px;color:#2e2e2e;transform:scaleX(1.0992);-webkit-text-stroke:0.35px #fff;">Defect_2</div>
<svg style="left:13.1px;top:260.20px;filter:blur(0.5px)" width="14" height="25.6" viewBox="0 0 14 25.6"><path d="M0 0 L13.6 12.8 L0 25.6 Z" fill="#383838"/></svg>
<div class="t" style="left:77.4px;top:309.8px;color:#2e2e2e;transform:scaleX(1.0992);-webkit-text-stroke:0.35px #fff;">Defect_3</div>
<svg style="left:13.1px;top:311.95px;filter:blur(0.5px)" width="14" height="25.6" viewBox="0 0 14 25.6"><path d="M0 0 L13.6 12.8 L0 25.6 Z" fill="#383838"/></svg>
<div class="t" style="left:77.4px;top:361.6px;color:#2e2e2e;transform:scaleX(1.1041);-webkit-text-stroke:0.35px #fff;">Defect_4</div>
<svg style="left:13.1px;top:363.70px;filter:blur(0.5px)" width="14" height="25.6" viewBox="0 0 14 25.6"><path d="M0 0 L13.6 12.8 L0 25.6 Z" fill="#383838"/></svg>
<div class="t" style="left:77.4px;top:413.3px;color:#2e2e2e;transform:scaleX(1.0942);-webkit-text-stroke:0.35px #fff;">Defect_5</div>
<svg style="left:13.1px;top:415.45px;filter:blur(0.5px)" width="14" height="25.6" viewBox="0 0 14 25.6"><path d="M0 0 L13.6 12.8 L0 25.6 Z" fill="#383838"/></svg>
<div class="t" style="left:77.4px;top:465.1px;color:#2e2e2e;transform:scaleX(1.1017);-webkit-text-stroke:0.35px #fff;">Defect_6</div>
<svg style="left:13.1px;top:467.20px;filter:blur(0.5px)" width="14" height="25.6" viewBox="0 0 14 25.6"><path d="M0 0 L13.6 12.8 L0 25.6 Z" fill="#383838"/></svg>
<div class="t" style="left:77.4px;top:516.8px;color:#2e2e2e;transform:scaleX(1.0922);-webkit-text-stroke:0.35px #fff;">Holmes</div>
<svg style="left:13.1px;top:518.95px;filter:blur(0.5px)" width="14" height="25.6" viewBox="0 0 14 25.6"><path d="M0 0 L13.6 12.8 L0 25.6 Z" fill="#383838"/></svg>
<div id="editor" style="left:683.5px;top:79px;width:2036.5px;height:911.5px;border:2px solid #adadad;border-radius:13px;background:#fff;overflow:hidden;"><div style="left:0;top:0;width:100%;height:59px;background:#ededed;border-bottom:2px solid #b4b4b4;"></div><div style="left:-2px;top:-2px;width:438.5px;height:61px;background:#fff;border:2px solid #b4b4b4;border-bottom:none;border-radius:13px 13px 0 0;"></div><div style="left:0;top:57px;width:434.5px;height:2px;background:#fff;"></div></div>
<div class="t" style="left:739.0px;top:96.1px;color:#111;transform:scaleX(1.0919);-webkit-text-stroke:0.12px #fff;">BooleanUtilsTest.java</div>
<svg style="left:690.0px;top:90.0px;filter:blur(0.5px);" width="44.0" height="44.0" viewBox="690 90 44 44"><path d="M702.4 96.6 H718 L725.6 104 V125.6 H702.4 Z" fill="#fbfcff" stroke="#b8a468" stroke-width="1.8"/><path d="M718 96.6 V104 H725.6" fill="#f0ead0" stroke="#b8a468" stroke-width="1.3"/><path d="M718 101 V112.6 Q718 117 713.6 117 Q710.6 117 709.8 114.4" stroke="#2f6fb0" stroke-width="3" fill="none"/><g transform="translate(694.6 111.8) scale(1.00)"><path d="M7.7 0.6 L15 14.6 Q15.6 16.4 13.6 16.4 H1.9 Q-0.2 16.4 0.6 14.4 Z" fill="#f5c860" stroke="#d89a30" stroke-width="1.4" stroke-linejoin="round"/><path d="M7.7 5.2 V11.2 M7.7 12.8 V14.6" stroke="#2a1a00" stroke-width="2"/></g></svg>
<svg style="left:1081.5px;top:99.4px;filter:blur(0.5px);" width="23.0" height="23.0" viewBox="0 0 23 23"><path d="M2 2 L6.2 2 L11.5 8 L16.8 2 L21 2 L21 6.2 L15 11.5 L21 16.8 L21 21 L16.8 21 L11.5 15 L6.2 21 L2 21 L2 16.8 L8 11.5 L2 6.2 Z" fill="#fff" stroke="#1a1a1a" stroke-width="2.4" stroke-linejoin="round"/></svg>
<svg style="left:2629.6px;top:99.6px;filter:blur(0.5px);" width="23.0" height="10.0" viewBox="0 0 23 10"><rect x="1.2" y="1.2" width="20.4" height="7" fill="#fff" stroke="#111" stroke-width="2.2"/></svg>
<svg style="left:2669.8px;top:100.2px;filter:blur(0.5px);" width="23.0" height="22.4" viewBox="0 0 23 22.4"><rect x="1.2" y="1.2" width="20.4" height="20" fill="#fff" stroke="#111" stroke-width="2.2"/><path d="M1.2 3.8 H21.6" stroke="#111" stroke-width="2.4"/></svg>
<div style="left:690px;top:145.5px;width:27.5px;height:838.5px;background:#f8f8f8;"></div>
<div style="left:779.6px;top:145.5px;width:2px;height:838.5px;background:#f1f1f1;"></div>
<div style="left:2683.3px;top:145.5px;width:29.5px;height:838.5px;background:#f6f6f6;"></div>
<div style="left:690px;top:320.5px;width:27.4px;height:265px;background:#f6b59b;background-image:repeating-conic-gradient(#ef7a4a 0 25%,#fdeee8 0 50%);background-size:3.88px 3.88px;border-top:2px solid #f07746;"></div>
<div style="left:785px;top:408.5px;width:1897px;height:29px;background:#e8f2fe;"></div>
<div id="codeclip" style="filter:blur(0.45px);left:686px;top:140px;width:2030px;height:844px;overflow:hidden;">
<div class="code ln" style="left:31.20px;top:6.00px;">288</div>
<div class="code" style="left:99.40px;top:6.00px;">        <span class="k">try</span> {</div>
<div class="code ln" style="left:31.20px;top:35.17px;">289</div>
<div class="code" style="left:99.40px;top:35.17px;">            BooleanUtils.<span class="i">toBooleanObject</span>(<span class="s">"X"</span>, <span class="s">"Y"</span>, <span class="s">"N"</span>, <span class="s">"U"</span>);</div>
<div class="code ln" style="left:31.20px;top:64.34px;">290</div>
<div class="code" style="left:99.40px;top:64.34px;">            <span class="i">fail</span>();</div>
<div class="code ln" style="left:31.20px;top:93.51px;">291</div>
<div class="code" style="left:99.40px;top:93.51px;">        } <span class="k">catch</span> (IllegalArgumentException <span class="v">ex</span>) {}</div>
<div class="code ln" style="left:31.20px;top:122.68px;">292</div>
<div class="code" style="left:99.40px;top:122.68px;">    }</div>
<div class="code ln" style="left:31.20px;top:151.85px;">293</div>
<div class="code ln" style="left:31.20px;top:181.02px;">294</div>
<div class="code" style="left:99.40px;top:181.02px;">    <span class="c">//-----------------------------------------------------------------------</span></div>
<div class="code ln" style="left:31.20px;top:210.19px;">295</div>
<div class="code" style="left:99.40px;top:210.19px;">    <span class="k">public</span> <span class="k">void</span> test_toBoolean_String() {</div>
<div class="code ln" style="left:31.20px;top:239.36px;">296</div>
<div class="code ln" style="left:31.20px;top:268.53px;">297</div>
<div class="code" style="left:99.40px;top:268.53px;">        <span class="c">// </span><span class="sel"><span class="selb">TODO</span>: Test 00 (Training)</span></div>
<div class="code ln" style="left:31.20px;top:297.70px;">298</div>
<div class="code ln" style="left:31.20px;top:326.87px;">299</div>
<div class="code" style="left:99.40px;top:326.87px;">        <span class="c">// Failing Test 00</span></div>
<div class="code ln" style="left:31.20px;top:356.04px;">300</div>
<div class="code" style="left:99.40px;top:356.04px;">        <span class="c">// Method to highlight = toBoolean()</span></div>
<div class="code ln" style="left:31.20px;top:385.21px;">301</div>
<div class="code" style="left:99.40px;top:385.21px;">        <span class="i">assertEquals</span>(<span class="k">false</span>, BooleanUtils.<span class="i">toBoolean</span>(<span class="s">"tru"</span>));</div>
<div class="code ln" style="left:31.20px;top:414.38px;">302</div>
<div class="code" style="left:99.40px;top:414.38px;">    }</div>
<div class="code ln" style="left:31.20px;top:443.55px;">303</div>
<div class="code ln" style="left:31.20px;top:472.72px;">304</div>
<div class="code" style="left:99.40px;top:472.72px;">    <span class="k">public</span> <span class="k">void</span> test_toBoolean_String_String_String() {</div>
<div class="code ln" style="left:31.20px;top:501.89px;">305</div>
<div class="code" style="left:99.40px;top:501.89px;">        <span class="i">assertEquals</span>(<span class="k">true</span>, BooleanUtils.<span class="i">toBoolean</span>((String) <span class="k">null</span>, <span class="k">null</span>, <span class="s">"N"</span>));</div>
<div class="code ln" style="left:31.20px;top:531.06px;">306</div>
<div class="code" style="left:99.40px;top:531.06px;">        <span class="i">assertEquals</span>(<span class="k">false</span>, BooleanUtils.<span class="i">toBoolean</span>((String) <span class="k">null</span>, <span class="s">"Y"</span>, <span class="k">null</span>));</div>
<div class="code ln" style="left:31.20px;top:560.23px;">307</div>
<div class="code" style="left:99.40px;top:560.23px;">        <span class="k">try</span> {</div>
<div class="code ln" style="left:31.20px;top:589.40px;">308</div>
<div class="code" style="left:99.40px;top:589.40px;">            BooleanUtils.<span class="i">toBooleanObject</span>((String) <span class="k">null</span>, <span class="s">"Y"</span>, <span class="s">"N"</span>, <span class="s">"U"</span>);</div>
<div class="code ln" style="left:31.20px;top:618.57px;">309</div>
<div class="code" style="left:99.40px;top:618.57px;">            <span class="i">fail</span>();</div>
<div class="code ln" style="left:31.20px;top:647.74px;">310</div>
<div class="code" style="left:99.40px;top:647.74px;">        } <span class="k">catch</span> (IllegalArgumentException <span class="v">ex</span>) {}</div>
<div class="code ln" style="left:31.20px;top:676.91px;">311</div>
<div class="code ln" style="left:31.20px;top:706.08px;">312</div>
<div class="code" style="left:99.40px;top:706.08px;">        <span class="i">assertEquals</span>(<span class="k">true</span>, BooleanUtils.<span class="i">toBoolean</span>(<span class="s">"Y"</span>, <span class="s">"Y"</span>, <span class="s">"N"</span>));</div>
<div class="code ln" style="left:31.20px;top:735.25px;">313</div>
<div class="code" style="left:99.40px;top:735.25px;">        <span class="i">assertEquals</span>(<span class="k">false</span>, BooleanUtils.<span class="i">toBoolean</span>(<span class="s">"N"</span>, <span class="s">"Y"</span>, <span class="s">"N"</span>));</div>
<div class="code ln" style="left:31.20px;top:764.42px;">314</div>
<div class="code" style="left:99.40px;top:764.42px;">        <span class="k">try</span> {</div>
<div class="code ln" style="left:31.20px;top:793.59px;">315</div>
<div class="code" style="left:99.40px;top:793.59px;">            BooleanUtils.<span class="i">toBoolean</span>(<span class="k">null</span>, <span class="s">"Y"</span>, <span class="s">"N"</span>);</div>
<div class="code ln" style="left:31.20px;top:822.76px;">316</div>
<div class="code" style="left:99.40px;top:822.76px;">            <span class="i">fail</span>();</div>
</div>
<div style="left:1257px;top:409px;width:4px;height:28px;background:#000;"></div>
<svg preserveAspectRatio="none" style="left:688.6px;top:404.6px;filter:blur(0.5px);" width="31.0" height="36.5" viewBox="0 0 34 36"><g transform="translate(0.5 1.5) scale(0.98)"><rect x="7.6" y="4" width="24.6" height="27.6" rx="2" fill="#e9d2a8" stroke="#cfae7c" stroke-width="1.6"/><rect x="10.8" y="8.4" width="18.4" height="20" fill="#eef2fb"/><path d="M13 5.6 Q13 0.6 20 0.6 Q27 0.6 27 5.6 V7.4 H13 Z" fill="#8f9fbe"/><path d="M20 13.2 H27 M20 17.6 H27 M18 22 H27" stroke="#9db0cf" stroke-width="1.8"/><path d="M1.6 19.6 L7.4 25.6 L18.6 13" stroke="#1b84e6" stroke-width="3.6" fill="none" stroke-linecap="round" stroke-linejoin="round"/></g></svg>
<svg style="left:757.0px;top:353.8px;filter:blur(0.5px);" width="21.0" height="21.0" viewBox="0 0 21 21"><circle cx="10.5" cy="10.5" r="9" fill="#e6ebf2" stroke="#a9b6c9" stroke-width="1.8"/><path d="M5 10.5 H16" stroke="#56667e" stroke-width="2.4"/></svg>
<svg style="left:757.0px;top:617.0px;filter:blur(0.5px);" width="21.0" height="21.0" viewBox="0 0 21 21"><circle cx="10.5" cy="10.5" r="9" fill="#e6ebf2" stroke="#a9b6c9" stroke-width="1.8"/><path d="M5 10.5 H16" stroke="#56667e" stroke-width="2.4"/></svg>
<div style="left:2689px;top:201.2px;width:20px;height:11.4px;border:2px solid #f5ca45;background:#fbe9ae;filter:blur(0.4px);"></div>
<div style="left:2689px;top:318.4px;width:20px;height:12.6px;border:2px solid #f5ca45;background:#fbe9ae;filter:blur(0.4px);"></div>
<div style="left:2689px;top:344.4px;width:20px;height:11.6px;border:2px solid #f5ca45;background:#fbe9ae;filter:blur(0.4px);"></div>
<div style="left:2689px;top:358.0px;width:20px;height:18.4px;border:2px solid #f5ca45;background:#fbe9ae;filter:blur(0.4px);"></div><div style="left:2689px;top:366.2px;width:20px;height:2px;background:#f5ca45;"></div>
<div style="left:2689px;top:390.6px;width:20px;height:16.0px;border:2px solid #f5ca45;background:#fbe9ae;filter:blur(0.4px);"></div>
<div style="left:2689px;top:408.0px;width:20px;height:18.4px;border:2px solid #f5ca45;background:#fbe9ae;filter:blur(0.4px);"></div><div style="left:2689px;top:416.2px;width:20px;height:2px;background:#f5ca45;"></div>
<div style="left:2689px;top:432.6px;width:20px;height:22.2px;border:2px solid #f5ca45;background:#fbe9ae;filter:blur(0.4px);"></div><div style="left:2689px;top:442.7px;width:20px;height:2px;background:#f5ca45;"></div>
<div style="left:2689px;top:468.6px;width:20px;height:24.6px;border:2px solid #f5ca45;background:#fbe9ae;filter:blur(0.4px);"></div><div style="left:2689px;top:479.9px;width:20px;height:2px;background:#f5ca45;"></div>
<div style="left:2689px;top:564.8px;width:20px;height:12.2px;border:2px solid #3a8af5;background:#b4d2f8;filter:blur(0.4px);"></div>
<div id="bottom" style="left:683.5px;top:1000px;width:2036.5px;height:483px;border:2px solid #adadad;border-radius:13px;background:#e3e3e3;overflow:hidden;"><div style="left:0;top:0;width:100%;height:59px;background:#dcdcdc;border-bottom:2px solid #b4b4b4;"></div><div style="left:-2px;top:-2px;width:194.5px;height:61px;background:#e3e3e3;border:2px solid #b4b4b4;border-bottom:none;border-radius:13px 13px 0 0;"></div><div style="left:0;top:57px;width:190.5px;height:2px;background:#e3e3e3;"></div><div style="left:0;top:59px;width:100%;height:47px;background:#e6e6e6;"></div></div>
<div class="t" style="left:738.5px;top:1015.6px;color:#111;transform:scaleX(1.0571);-webkit-text-stroke:0.12px #e3e3e3;">Tasks</div>
<div class="t" style="left:932.5px;top:1015.6px;color:#444;transform:scaleX(1.1156);-webkit-text-stroke:0.3px #dcdcdc;">Problems</div>
<div class="t" style="left:1144.1px;top:1015.6px;color:#444;transform:scaleX(1.0737);-webkit-text-stroke:0.3px #dcdcdc;">Javadoc</div>
<div class="t" style="left:1333.6px;top:1015.6px;color:#444;transform:scaleX(1.1288);-webkit-text-stroke:0.3px #dcdcdc;">Declaration</div>
<div class="t" style="left:1574.8px;top:1015.6px;color:#444;transform:scaleX(1.0703);-webkit-text-stroke:0.3px #dcdcdc;">Console</div>
<div class="t" style="left:689.8px;top:1069.0px;color:#444;transform:scaleX(1.1010);-webkit-text-stroke:0.35px #e6e6e6;">7 items</div>
<svg style="left:694.0px;top:1012.0px;filter:blur(0.5px);" width="36.0" height="36.0" viewBox="0 0 34 34"><g transform="translate(0.5 1.5) scale(0.99)"><rect x="7.6" y="4" width="24.6" height="27.6" rx="2" fill="#e9d2a8" stroke="#cfae7c" stroke-width="1.6"/><rect x="10.8" y="8.4" width="18.4" height="20" fill="#eef2fb"/><path d="M13 5.6 Q13 0.6 20 0.6 Q27 0.6 27 5.6 V7.4 H13 Z" fill="#8f9fbe"/><path d="M20 13.2 H27 M20 17.6 H27 M18 22 H27" stroke="#9db0cf" stroke-width="1.8"/><path d="M1.6 19.6 L7.4 25.6 L18.6 13" stroke="#1b84e6" stroke-width="3.6" fill="none" stroke-linecap="round" stroke-linejoin="round"/></g></svg>
<svg style="left:838.4px;top:1019.6px;filter:blur(0.5px);" width="23.0" height="23.0" viewBox="0 0 23 23"><path d="M2 2 L6.2 2 L11.5 8 L16.8 2 L21 2 L21 6.2 L15 11.5 L21 16.8 L21 21 L16.8 21 L11.5 15 L6.2 21 L2 21 L2 16.8 L8 11.5 L2 6.2 Z" fill="#fff" stroke="#1a1a1a" stroke-width="2.4" stroke-linejoin="round"/></svg>
<svg style="left:880.0px;top:1005.0px;filter:blur(0.5px);" width="1700.0" height="50.0" viewBox="880 1005 1700 50"><path d="M889.6 1014.6 H915.5 Q918.5 1020 916.4 1026 Q914.6 1033 918.6 1045.8 H889.6 Z" fill="#dfeaf8" stroke="#b5b8c4" stroke-width="1.3"/><path d="M889.6 1046 V1014.6 H912" stroke="#bfae78" stroke-width="2" fill="none"/><path d="M889.6 1031.6 H917 M908.6 1014.6 V1045.8" stroke="#aabbe0" stroke-width="1.6"/><circle cx="900.4" cy="1023.4" r="5.8" fill="#e8262c"/><path d="M900.4 1035.4 L906 1045 H894.8 Z" fill="#fbbf2c" stroke="#f2a820" stroke-width="1.6" stroke-linejoin="round"/><text x="1104.6" y="1040.6" font-family="Liberation Serif, serif" font-style="italic" font-weight="bold" font-size="26" fill="#2b7cc4">@</text><path d="M1292 1014.6 H1306 L1312.6 1021 V1041.4 H1292 Z" fill="#fbfcff" stroke="#c0a566" stroke-width="1.8"/><path d="M1306 1014.6 V1021 H1312.6" fill="none" stroke="#c0a566" stroke-width="1.3"/><path d="M1300.6 1022.6 Q1297.6 1022.6 1297.6 1025.4 Q1297.6 1028 1295.6 1028.6 Q1297.6 1029.2 1297.6 1031.8 Q1297.6 1034.6 1300.6 1034.6 M1302.6 1026 H1308 M1302.6 1031 H1308" stroke="#4a72b8" stroke-width="1.8" fill="none"/><path d="M1321.4 1040.4 L1313.6 1033.4 V1037.2 H1304.6 V1043.6 H1313.6 V1047.6 Z" fill="url(#gy)" stroke="#c88a1c" stroke-width="1.7" stroke-linejoin="round"/><rect x="1536" y="1017" width="26" height="21" rx="3" fill="#2f5fae" stroke="#274f98" stroke-width="1.4"/><rect x="1539.6" y="1020.6" width="18.8" height="12.6" fill="#e4ecf8"/><path d="M1541.6 1024.4 H1552 M1541.6 1028.4 H1556" stroke="#4a5f98" stroke-width="1.8"/><path d="M1545 1038 H1553 L1554.6 1041.4 H1561 V1044 H1537 V1041.4 H1543.4 Z" fill="#2f5fae"/><path d="M2490.5 1020 H2508 M2490.5 1041.4 H2508" stroke="#4a7a9c" stroke-width="1.8"/><path d="M2503 1015.4 L2508.6 1020 L2503 1024.6 M2503 1036.8 L2508.6 1041.4 L2503 1046" stroke="#3a6a8c" stroke-width="1.8" fill="none"/><path d="M2511.6 1014 V1026 M2511.6 1036 V1047" stroke="#3a5a7c" stroke-width="2"/><path d="M2525.6 1030.6 L2517.4 1023.4 V1027.4 H2501 V1033.8 H2517.4 V1037.8 Z" fill="url(#gy)" stroke="#c88a1c" stroke-width="1.7" stroke-linejoin="round"/><circle cx="2546.6" cy="1021.6" r="6.6" fill="url(#ggr)" stroke="#c6c6c6" stroke-width="1"/><circle cx="2560.8" cy="1026.5" r="6.6" fill="url(#ggr)" stroke="#c6c6c6" stroke-width="1"/><circle cx="2549.3" cy="1035.4" r="7.1" fill="url(#gpl)"/></svg>
<div style="left:2488px;top:1008px;width:88px;height:50px;background:rgba(255,255,255,0.12);"></div>
<div style="left:2580px;top:1008px;width:44px;height:50px;background:rgba(255,255,255,0.12);"></div>
<svg style="left:2595.0px;top:1017.2px;filter:blur(0.5px);" width="24.0" height="12.0" viewBox="0 0 24 12"><path d="M1.6 1.2 H22.4 L12 10.6 Z" fill="#fff" stroke="#111" stroke-width="2.2" stroke-linejoin="miter"/></svg>
<svg style="left:2629.2px;top:1019.4px;filter:blur(0.5px);" width="23.0" height="10.0" viewBox="0 0 23 10"><rect x="1.2" y="1.2" width="20.4" height="7" fill="#fff" stroke="#111" stroke-width="2.2"/></svg>
<svg style="left:2669.6px;top:1020.0px;filter:blur(0.5px);" width="23.0" height="22.4" viewBox="0 0 23 22.4"><rect x="1.2" y="1.2" width="20.4" height="20" fill="#fff" stroke="#111" stroke-width="2.2"/><path d="M1.2 3.8 H21.6" stroke="#111" stroke-width="2.4"/></svg>
<div id="table" style="left:690px;top:1108px;width:2023.5px;height:369.5px;background:#fff;overflow:hidden;">
<div style="left:0;top:0;width:100%;height:64px;background:linear-gradient(#fff,#fdfdfd 60%,#f4f4f4);border-bottom:2px solid #e0e0e0;"></div>
<div style="left:89.0px;top:0;width:2px;height:64px;background:#e2e2e2;"></div>
<div style="left:89.0px;top:64px;width:0;height:320px;border-left:2px dotted #f0875a;"></div>
<div style="left:167.5px;top:0;width:2px;height:64px;background:#e2e2e2;"></div>
<div style="left:167.5px;top:64px;width:0;height:320px;border-left:2px dotted #f0875a;"></div>
<div style="left:953.4px;top:0;width:2px;height:64px;background:#e2e2e2;"></div>
<div style="left:953.4px;top:64px;width:0;height:320px;border-left:2px dotted #f0875a;"></div>
<div style="left:1189.8px;top:0;width:2px;height:64px;background:#e2e2e2;"></div>
<div style="left:1189.8px;top:64px;width:0;height:320px;border-left:2px dotted #f0875a;"></div>
<div style="left:1504.8px;top:0;width:2px;height:64px;background:#e2e2e2;"></div>
<div style="left:1504.8px;top:64px;width:0;height:320px;border-left:2px dotted #f0875a;"></div>
<div style="left:1741.3px;top:0;width:2px;height:64px;background:#e2e2e2;"></div>
<div style="left:1741.3px;top:64px;width:0;height:320px;border-left:2px dotted #f0875a;"></div>
<div class="t" style="left:181.0px;top:16.0px;color:#4c4c4c;transform:scaleX(1.1570);-webkit-text-stroke:0.35px #fcfcfc;">Description</div>
<div class="t" style="left:968.5px;top:16.0px;color:#4c4c4c;transform:scaleX(1.0569);-webkit-text-stroke:0.35px #fcfcfc;">Resource</div>
<div class="t" style="left:1204.7px;top:16.0px;color:#4c4c4c;transform:scaleX(1.1583);-webkit-text-stroke:0.35px #fcfcfc;">Path</div>
<div class="t" style="left:1519.9px;top:16.0px;color:#4c4c4c;transform:scaleX(1.1690);-webkit-text-stroke:0.35px #fcfcfc;">Location</div>
<div class="t" style="left:1757.6px;top:16.0px;color:#4c4c4c;transform:scaleX(1.0769);-webkit-text-stroke:0.35px #fcfcfc;">Type</div>
<div class="t" style="left:107px;top:14px;color:#2c4a6e;font-weight:bold;font-size:22px">!</div>
<svg style="left:11px;top:24px" width="20" height="15" viewBox="0 0 20 15"><path d="M2 7 L7 12 L18 2" fill="none" stroke="#2c4a6e" stroke-width="2.6"/></svg>
<div style="left:0;top:64.4px;width:100%;height:51.4px;background:#f07746;"></div>
<div style="left:170.3px;top:71.30px;width:782.0px;height:44px;overflow:hidden;"><div class="t" style="left:5.0px;top:4.1px;color:#fff;transform:scaleX(1.0429);-webkit-text-stroke:0.35px #f07746;">TODO: Test 00 (Training)</div></div>
<div style="left:958.9px;top:71.30px;width:231.6px;height:44px;overflow:hidden;"><div class="t" style="left:3.8px;top:4.1px;color:#fff;transform:scaleX(1.0961);-webkit-text-stroke:0.35px #f07746;">BooleanUtilsTest.java</div></div>
<div style="left:1193.7px;top:71.30px;width:309.2px;height:44px;overflow:hidden;"><div class="t" style="left:6.0px;top:4.1px;color:#fff;transform:scaleX(1.0714);-webkit-text-stroke:0.35px #f07746;">/Defect_0_Training/src/test/java</div></div>
<div style="left:1509.2px;top:71.30px;width:232.0px;height:44px;overflow:hidden;"><div class="t" style="left:3.9px;top:4.1px;color:#fff;transform:scaleX(1.0686);-webkit-text-stroke:0.35px #f07746;">line 297</div></div>
<div style="left:1745.3px;top:71.30px;width:270.0px;height:44px;overflow:hidden;"><div class="t" style="left:5.0px;top:4.1px;color:#fff;transform:scaleX(1.0228);-webkit-text-stroke:0.35px #f07746;">Java Task</div></div>
<div style="left:170.3px;top:123.05px;width:782.0px;height:44px;overflow:hidden;"><div class="t" style="left:5.0px;top:4.1px;color:#2e2e2e;transform:scaleX(1.0330);-webkit-text-stroke:0.35px #fff;">TODO: Test 01</div></div>
<div style="left:958.9px;top:123.05px;width:231.6px;height:44px;overflow:hidden;"><div class="t" style="left:3.9px;top:4.1px;color:#2e2e2e;transform:scaleX(1.0586);-webkit-text-stroke:0.35px #fff;">StringEscapeUtilsTest.java</div></div>
<div style="left:1193.7px;top:123.05px;width:309.2px;height:44px;overflow:hidden;"><div class="t" style="left:6.0px;top:4.1px;color:#2e2e2e;transform:scaleX(1.1380);-webkit-text-stroke:0.35px #fff;">/Defect_1/src/test/org/apache</div></div>
<div style="left:1509.2px;top:123.05px;width:232.0px;height:44px;overflow:hidden;"><div class="t" style="left:3.8px;top:4.1px;color:#2e2e2e;transform:scaleX(1.0773);-webkit-text-stroke:0.35px #fff;">line 92</div></div>
<div style="left:1745.3px;top:123.05px;width:270.0px;height:44px;overflow:hidden;"><div class="t" style="left:5.0px;top:4.1px;color:#2e2e2e;transform:scaleX(1.0228);-webkit-text-stroke:0.35px #fff;">Java Task</div></div>
<div style="left:170.3px;top:174.80px;width:782.0px;height:44px;overflow:hidden;"><div class="t" style="left:5.0px;top:4.1px;color:#2e2e2e;transform:scaleX(1.0360);-webkit-text-stroke:0.35px #fff;">TODO: Test 02</div></div>
<div style="left:958.9px;top:174.80px;width:231.6px;height:44px;overflow:hidden;"><div class="t" style="left:3.8px;top:4.1px;color:#2e2e2e;transform:scaleX(1.1125);-webkit-text-stroke:0.35px #fff;">NumberUtilsTest.java</div></div>
<div style="left:1193.7px;top:174.80px;width:309.2px;height:44px;overflow:hidden;"><div class="t" style="left:6.0px;top:4.1px;color:#2e2e2e;transform:scaleX(1.1788);-webkit-text-stroke:0.35px #fff;">/Defect_2/src/test/java/org</div></div>
<div style="left:1509.2px;top:174.80px;width:232.0px;height:44px;overflow:hidden;"><div class="t" style="left:3.9px;top:4.1px;color:#2e2e2e;transform:scaleX(1.0724);-webkit-text-stroke:0.35px #fff;">line 178</div></div>
<div style="left:1745.3px;top:174.80px;width:270.0px;height:44px;overflow:hidden;"><div class="t" style="left:5.0px;top:4.1px;color:#2e2e2e;transform:scaleX(1.0228);-webkit-text-stroke:0.35px #fff;">Java Task</div></div>
<div style="left:170.3px;top:226.55px;width:782.0px;height:44px;overflow:hidden;"><div class="t" style="left:5.0px;top:4.1px;color:#2e2e2e;transform:scaleX(1.0360);-webkit-text-stroke:0.35px #fff;">TODO: Test 03</div></div>
<div style="left:958.9px;top:226.55px;width:231.6px;height:44px;overflow:hidden;"><div class="t" style="left:3.8px;top:4.1px;color:#2e2e2e;transform:scaleX(1.1125);-webkit-text-stroke:0.35px #fff;">NumberUtilsTest.java</div></div>
<div style="left:1193.7px;top:226.55px;width:309.2px;height:44px;overflow:hidden;"><div class="t" style="left:6.0px;top:4.1px;color:#2e2e2e;transform:scaleX(1.1788);-webkit-text-stroke:0.35px #fff;">/Defect_3/src/test/java/org</div></div>
<div style="left:1509.2px;top:226.55px;width:232.0px;height:44px;overflow:hidden;"><div class="t" style="left:3.9px;top:4.1px;color:#2e2e2e;transform:scaleX(1.0623);-webkit-text-stroke:0.35px #fff;">line 184</div></div>
<div style="left:1745.3px;top:226.55px;width:270.0px;height:44px;overflow:hidden;"><div class="t" style="left:5.0px;top:4.1px;color:#2e2e2e;transform:scaleX(1.0228);-webkit-text-stroke:0.35px #fff;">Java Task</div></div>
<div style="left:170.3px;top:278.30px;width:782.0px;height:44px;overflow:hidden;"><div class="t" style="left:5.0px;top:4.1px;color:#2e2e2e;transform:scaleX(1.0328);-webkit-text-stroke:0.35px #fff;">TODO: Test 04</div></div>
<div style="left:958.9px;top:278.30px;width:231.6px;height:44px;overflow:hidden;"><div class="t" style="left:3.8px;top:4.1px;color:#2e2e2e;transform:scaleX(1.1125);-webkit-text-stroke:0.35px #fff;">NumberUtilsTest.java</div></div>
<div style="left:1193.7px;top:278.30px;width:309.2px;height:44px;overflow:hidden;"><div class="t" style="left:6.0px;top:4.1px;color:#2e2e2e;transform:scaleX(1.1788);-webkit-text-stroke:0.35px #fff;">/Defect_4/src/test/java/org</div></div>
<div style="left:1509.2px;top:278.30px;width:232.0px;height:44px;overflow:hidden;"><div class="t" style="left:3.9px;top:4.1px;color:#2e2e2e;transform:scaleX(1.0686);-webkit-text-stroke:0.35px #fff;">line 253</div></div>
<div style="left:1745.3px;top:278.30px;width:270.0px;height:44px;overflow:hidden;"><div class="t" style="left:5.0px;top:4.1px;color:#2e2e2e;transform:scaleX(1.0228);-webkit-text-stroke:0.35px #fff;">Java Task</div></div>
<div style="left:170.3px;top:330.05px;width:782.0px;height:44px;overflow:hidden;"><div class="t" style="left:5.0px;top:4.1px;color:#2e2e2e;transform:scaleX(1.0360);-webkit-text-stroke:0.35px #fff;">TODO: Test 05</div></div>
<div style="left:958.9px;top:330.05px;width:231.6px;height:44px;overflow:hidden;"><div class="t" style="left:3.8px;top:4.1px;color:#2e2e2e;transform:scaleX(1.1125);-webkit-text-stroke:0.35px #fff;">NumberUtilsTest.java</div></div>
<div style="left:1193.7px;top:330.05px;width:309.2px;height:44px;overflow:hidden;"><div class="t" style="left:6.0px;top:4.1px;color:#2e2e2e;transform:scaleX(1.1788);-webkit-text-stroke:0.35px #fff;">/Defect_5/src/test/java/org</div></div>
<div style="left:1509.2px;top:330.05px;width:232.0px;height:44px;overflow:hidden;"><div class="t" style="left:3.9px;top:4.1px;color:#2e2e2e;transform:scaleX(1.0724);-webkit-text-stroke:0.35px #fff;">line 188</div></div>
<div style="left:1745.3px;top:330.05px;width:270.0px;height:44px;overflow:hidden;"><div class="t" style="left:5.0px;top:4.1px;color:#2e2e2e;transform:scaleX(1.0228);-webkit-text-stroke:0.35px #fff;">Java Task</div></div>
</div>
</body></html>
